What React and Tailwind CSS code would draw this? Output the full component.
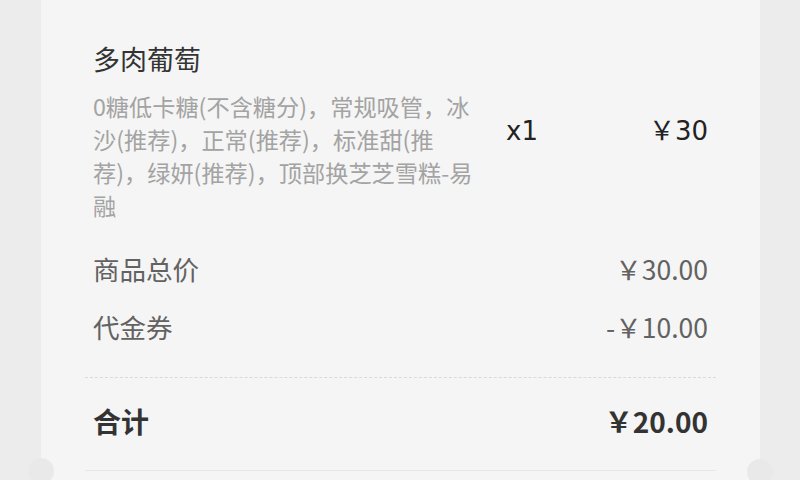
const SPECS = '0糖低卡糖(不含糖分)，常规吸管，冰沙(推荐)，正常(推荐)，标准甜(推荐)，绿妍(推荐)，顶部换芝芝雪糕-易融';

const SUMMARY = [
    { label: '商品总价', value: '￥30.00' },
    { label: '代金券', value: '-￥10.00' },
];

function Notch({ side }) {
    return (
        <div
            className={
                side === 'left'
                    ? 'absolute left-[-13px] top-[458px] w-[26px] h-[26px] rounded-full bg-[#e9e9e9]'
                    : 'absolute right-[-13px] top-[459px] w-[26px] h-[26px] rounded-full bg-[#e9e9e9]'
            }
        />
    );
}

export default function App() {
    return (
        <div className="w-[800px] h-[480px] overflow-hidden bg-[#ececec] font-['Noto_Sans_CJK_SC',sans-serif]">
            <div className="relative ml-[41px] w-[719px] h-[600px] bg-[#f5f5f5] px-[44px] pt-[41px]">

                {/* Product line */}
                <div className="flex items-center px-2">
                    <div className="w-[385px] shrink-0">
                        <p className="text-[27px] leading-[36px] text-[#333]">多肉葡萄</p>
                        <p className="mt-[13px] text-[23.2px] leading-[33px] text-[#a3a3a3]">
                            {SPECS}
                        </p>
                    </div>
                    <span className="ml-[28px] text-[26px] text-[#222] font-['DejaVu_Sans','Noto_Sans_CJK_SC',sans-serif]">
                        x1
                    </span>
                    <span className="flex-1 text-right text-[26px] text-[#222] font-['DejaVu_Sans','Noto_Sans_CJK_SC',sans-serif]">
                        ￥30
                    </span>
                </div>

                {/* Price breakdown */}
                <div className="pt-[18px] px-2">
                    {SUMMARY.map(row => (
                        <div key={row.label} className="h-[58px] flex items-center justify-between text-[26.5px] text-[#626262]">
                            <span>{row.label}</span>
                            <span>{row.value}</span>
                        </div>
                    ))}
                </div>

                <div className="mt-[21px] border-t border-dashed border-[#dadada]" />

                <div className="h-[86px] px-2 flex items-center justify-between text-[28px] font-bold text-[#333]">
                    <span>合计</span>
                    <span>￥20.00</span>
                </div>

                <div className="mt-[6px] border-t border-[#e6e6e6]" />

                <Notch side="left" />
                <Notch side="right" />
            </div>
        </div>
    );
}
